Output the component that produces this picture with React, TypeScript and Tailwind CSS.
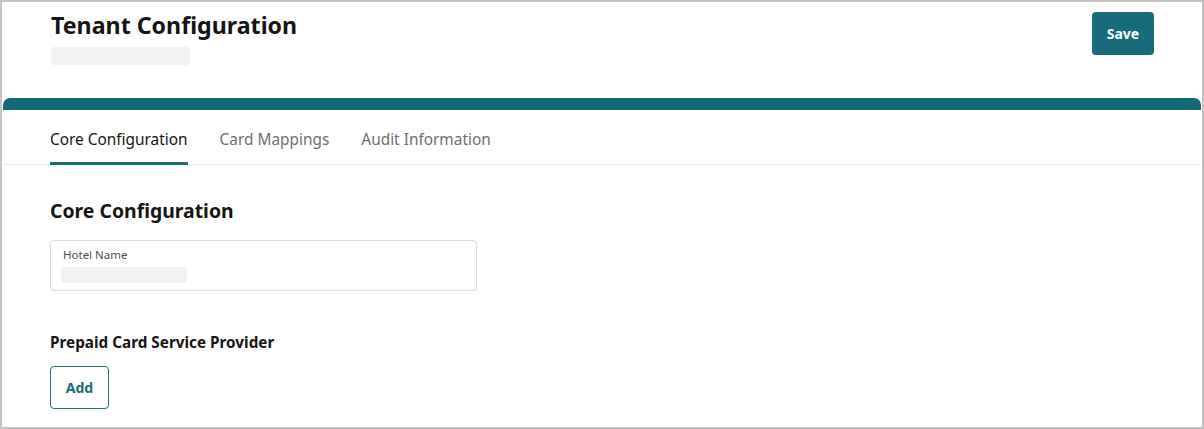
import React, { useState } from "react";

const TABS = ["Core Configuration", "Card Mappings", "Audit Information"];

const font = { fontFamily: '"Noto Sans", "Open Sans", Arial, sans-serif' };

export default function App() {
	const [active, setActive] = useState(0);

	return (
		<div
			className="w-[1204px] h-[429px] overflow-hidden bg-white border-2 border-[#c3c3c3] flex flex-col"
			style={font}
		>
			{/* Page header */}
			<header className="flex justify-between items-start pl-[49px] pr-[48px] pt-[8px] h-[96px]">
				<div>
					<h1 className="text-[23.2px] leading-[30px] font-bold text-[#161513]">Tenant Configuration</h1>
					<div className="mt-[7px] w-[139px] h-[18px] bg-[#f1f1f1] rounded-sm" />
				</div>
				<button className="mt-[2px] w-[62px] h-[43px] rounded bg-[#176b7b] text-white text-[14px] font-bold">
					Save
				</button>
			</header>

			{/* Card */}
			<div className="flex-1 mx-[1px] rounded-t-[7px] border-t-[12px] border-[#156a7a]">
				<nav className="flex gap-[32px] pl-[47px] border-b border-[#ececec] h-[55px] items-end">
					{TABS.map((t, i) => (
						<button
							key={t}
							onClick={() => setActive(i)}
							className={`pb-[12px] text-[15.4px] leading-[20px] border-b-[3px] -mb-px ${
								i === active ? "border-[#1c6b78] text-[#161513]" : "border-transparent text-[#6f6e6c]"
							}`}
						>
							{t}
						</button>
					))}
				</nav>

				<section className="pl-[47px] pt-[34px]">
					<h2 className="text-[19.4px] leading-[24px] font-bold text-[#161513]">Core Configuration</h2>

					<div className="mt-[17px] w-[427px] h-[51px] border border-[#dcdcdc] rounded-[4px] pl-[12px] pt-[6px]">
						<div className="text-[11.5px] leading-[15px] text-[#4f4e4c]">Hotel Name</div>
						<div className="mt-[5px] -ml-[2px] w-[126px] h-[16px] bg-[#f1f1f1] rounded-sm" />
					</div>

					<h3 className="mt-[41px] text-[15.3px] leading-[20px] font-bold text-[#161513]">
						Prepaid Card Service Provider
					</h3>

					<button className="mt-[14px] w-[59px] h-[43px] rounded-[4px] border border-[#236e7b] text-[#176b7b] text-[14px] font-bold">
						Add
					</button>
				</section>
			</div>
		</div>
	);
}
